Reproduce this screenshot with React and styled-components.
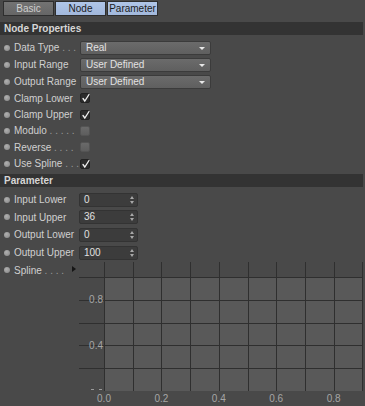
import React from 'react';
import styled, { createGlobalStyle } from 'styled-components';

const GlobalStyle = createGlobalStyle`
    html, body {
        margin: 0;
        padding: 0;
        background: #494949;
        overflow: hidden;
    }
    body {
        font-family: "Liberation Sans", Arial, sans-serif;
        font-size: 10px;
        color: #d0d0d0;
    }
`;

const Panel = styled.div`
    width: 363px;
    height: 406px;
    padding-top: 1px;
    box-sizing: border-box;
`;

const TabBar = styled.div`
    display: flex;
    gap: 1px;
    padding-left: 3px;
    height: 15px;
`;
const Tab = styled.div`
    width: 51px;
    height: 15px;
    box-sizing: border-box;
    border: 1px solid #2e2e2e;
    text-align: center;
    line-height: 13px;
    background: ${p => p.active ? 'linear-gradient(#b0c6e8, #a2b8dc)' : 'linear-gradient(#737373, #666)'};
    color: ${p => p.active ? '#1c1c1c' : '#cfcfcf'};
`;

const SectionHeader = styled.div`
    margin-top: ${p => p.top}px;
    height: 13px;
    line-height: 13px;
    padding-left: 4px;
    background: #333;
    color: #d6d6d6;
    font-weight: bold;
`;

const RowList = styled.div`
    margin-top: 4px;
`;
const Row = styled.div`
    display: flex;
    align-items: ${p => p.top ? 'flex-start' : 'center'};
    height: ${p => p.h}px;
`;
const Label = styled.div`
    width: ${p => p.w || 80}px;
    height: ${p => p.lh || 17}px;
    flex-shrink: 0;
    display: flex;
    align-items: center;
    padding-left: 4px;
    box-sizing: border-box;
    white-space: nowrap;
`;
const Bullet = styled.span`
    width: 6px;
    height: 6px;
    border-radius: 50%;
    background: radial-gradient(circle at 40% 35%, #b0b0b0, #858585);
    margin-right: 4px;
    flex-shrink: 0;
`;
const Leader = styled.span`
    color: #9a9a9a;
    white-space: pre;
`;
const Disclosure = styled.span`
    margin-left: 8px;
    width: 0;
    height: 0;
    border-top: 3px solid transparent;
    border-bottom: 3px solid transparent;
    border-left: 4px solid #151515;
    margin-top: -2px;
`;

const Dropdown = styled.div`
    position: relative;
    width: 131px;
    height: 14px;
    box-sizing: border-box;
    border: 1px solid #3b3b3b;
    border-radius: 2px;
    background: linear-gradient(#6b6b6b, #5f5f5f);
    color: #e2e2e2;
    line-height: 12px;
    padding-left: 5px;
    &::after {
        content: '';
        position: absolute;
        right: 5px;
        top: 5px;
        border-left: 3px solid transparent;
        border-right: 3px solid transparent;
        border-top: 3px solid #e8e8e8;
    }
`;

const Check = styled.div`
    width: 10px;
    height: 10px;
    box-sizing: border-box;
    border-radius: 2px;
    border: 1px solid ${p => p.on ? '#222' : '#545454'};
    background: ${p => p.on ? '#2c2c2c' : 'linear-gradient(#6a6a6a, #5e5e5e)'};
    position: relative;
    svg {
        position: absolute;
        left: 0;
        top: -1px;
    }
`;

const NumberBox = styled.div`
    position: relative;
    margin-left: -1px;
    width: 59px;
    height: 14px;
    box-sizing: border-box;
    border: 1px solid #333;
    border-radius: 2px;
    background: #3c3c3c;
    color: #e0e0e0;
    line-height: 12px;
    padding-left: 4px;
    &::before, &::after {
        content: '';
        position: absolute;
        right: 3px;
        border-left: 2px solid transparent;
        border-right: 2px solid transparent;
    }
    &::before {
        top: 2px;
        border-bottom: 3px solid #a8a8a8;
    }
    &::after {
        top: 7px;
        border-top: 3px solid #a8a8a8;
    }
`;

const Graph = styled.svg`
    display: block;
    margin-left: -2px;
    flex-shrink: 0;
    text {
        font-family: "Liberation Sans", Arial, sans-serif;
        font-size: 10px;
        fill: #a6a6a6;
    }
`;

const nodeRows = [
    { label: 'Data Type', dots: 3, kind: 'drop', value: 'Real' },
    { label: 'Input Range', kind: 'drop', value: 'User Defined' },
    { label: 'Output Range', kind: 'drop', value: 'User Defined' },
    { label: 'Clamp Lower', kind: 'check', value: true },
    { label: 'Clamp Upper', kind: 'check', value: true },
    { label: 'Modulo', dots: 5, kind: 'check', value: false },
    { label: 'Reverse', dots: 4, kind: 'check', value: false },
    { label: 'Use Spline', dots: 3, kind: 'check', value: true },
];

const paramRows = [
    { label: 'Input Lower', value: '0' },
    { label: 'Input Upper', value: '36' },
    { label: 'Output Lower', value: '0' },
    { label: 'Output Upper', value: '100' },
];

const dots = n => n ? ' ' + Array(n).fill('.').join(' ') : '';

const CheckMark = () => (
    <svg width="10" height="10" viewBox="0 0 10 10">
        <path d="M2 5.5 L3.8 8 L8 1.5" stroke="#f0f0f0" strokeWidth="1.3" fill="none" strokeLinecap="round" />
    </svg>
);

const SplineGraph = () => {
    const vx = Array.from({ length: 10 }, (_, k) => Math.round(26 + k * 28.7) + 0.5);
    const hy = [16, 38.8, 61.6, 84.4, 107.2].map(v => Math.round(v) + 0.5);
    const xl = [['0.0', 0], ['0.2', 2], ['0.4', 4], ['0.6', 6], ['0.8', 8]];
    return (
        <Graph width="287" height="144">
            <rect x="26" y="16" width="258" height="114" fill="#595959" />
            {hy.map(y => <line key={y} x1="1" x2="284" y1={y} y2={y} stroke="#2f2f2f" />)}
            {vx.map(x => <line key={x} x1={x} x2={x} y1="1" y2="130" stroke="#2f2f2f" />)}
            <text x="25" y="42" textAnchor="end">0.8</text>
            <text x="25" y="88" textAnchor="end">0.4</text>
            <line x1="13" x2="16" y1="128.5" y2="128.5" stroke="#9a9a9a" />
            <line x1="21" x2="24" y1="128.5" y2="128.5" stroke="#9a9a9a" />
            {xl.map(([t, k]) => (
                <text key={t} x={26 + k * 28.7} y="141" textAnchor="middle">{t}</text>
            ))}
        </Graph>
    );
};

const App = () => (
    <>
        <GlobalStyle />
        <Panel>
            <TabBar>
                <Tab>Basic</Tab>
                <Tab active>Node</Tab>
                <Tab active>Parameter</Tab>
            </TabBar>

            <SectionHeader top={6}>Node Properties</SectionHeader>
            <RowList>
                {nodeRows.map(r => (
                    <Row key={r.label} h={r.kind === 'drop' ? 17 : 16.4}>
                        <Label lh={r.kind === 'drop' ? 17 : 16.4}>
                            <Bullet />
                            {r.label}
                            <Leader>{dots(r.dots)}</Leader>
                        </Label>
                        {r.kind === 'drop'
                            ? <Dropdown>{r.value}</Dropdown>
                            : <Check on={r.value}>{r.value && <CheckMark />}</Check>}
                    </Row>
                ))}
            </RowList>

            <SectionHeader top={2}>Parameter</SectionHeader>
            <RowList>
                {paramRows.map(r => (
                    <Row key={r.label} h={17.6}>
                        <Label lh={17.6}>
                            <Bullet />
                            {r.label}
                        </Label>
                        <NumberBox>{r.value}</NumberBox>
                    </Row>
                ))}
                <Row h={144} top>
                    <Label lh={17.6}>
                        <Bullet />
                        Spline
                        <Leader>{dots(4)}</Leader>
                        <Disclosure />
                    </Label>
                    <SplineGraph />
                </Row>
            </RowList>
        </Panel>
    </>
);

export default App;
